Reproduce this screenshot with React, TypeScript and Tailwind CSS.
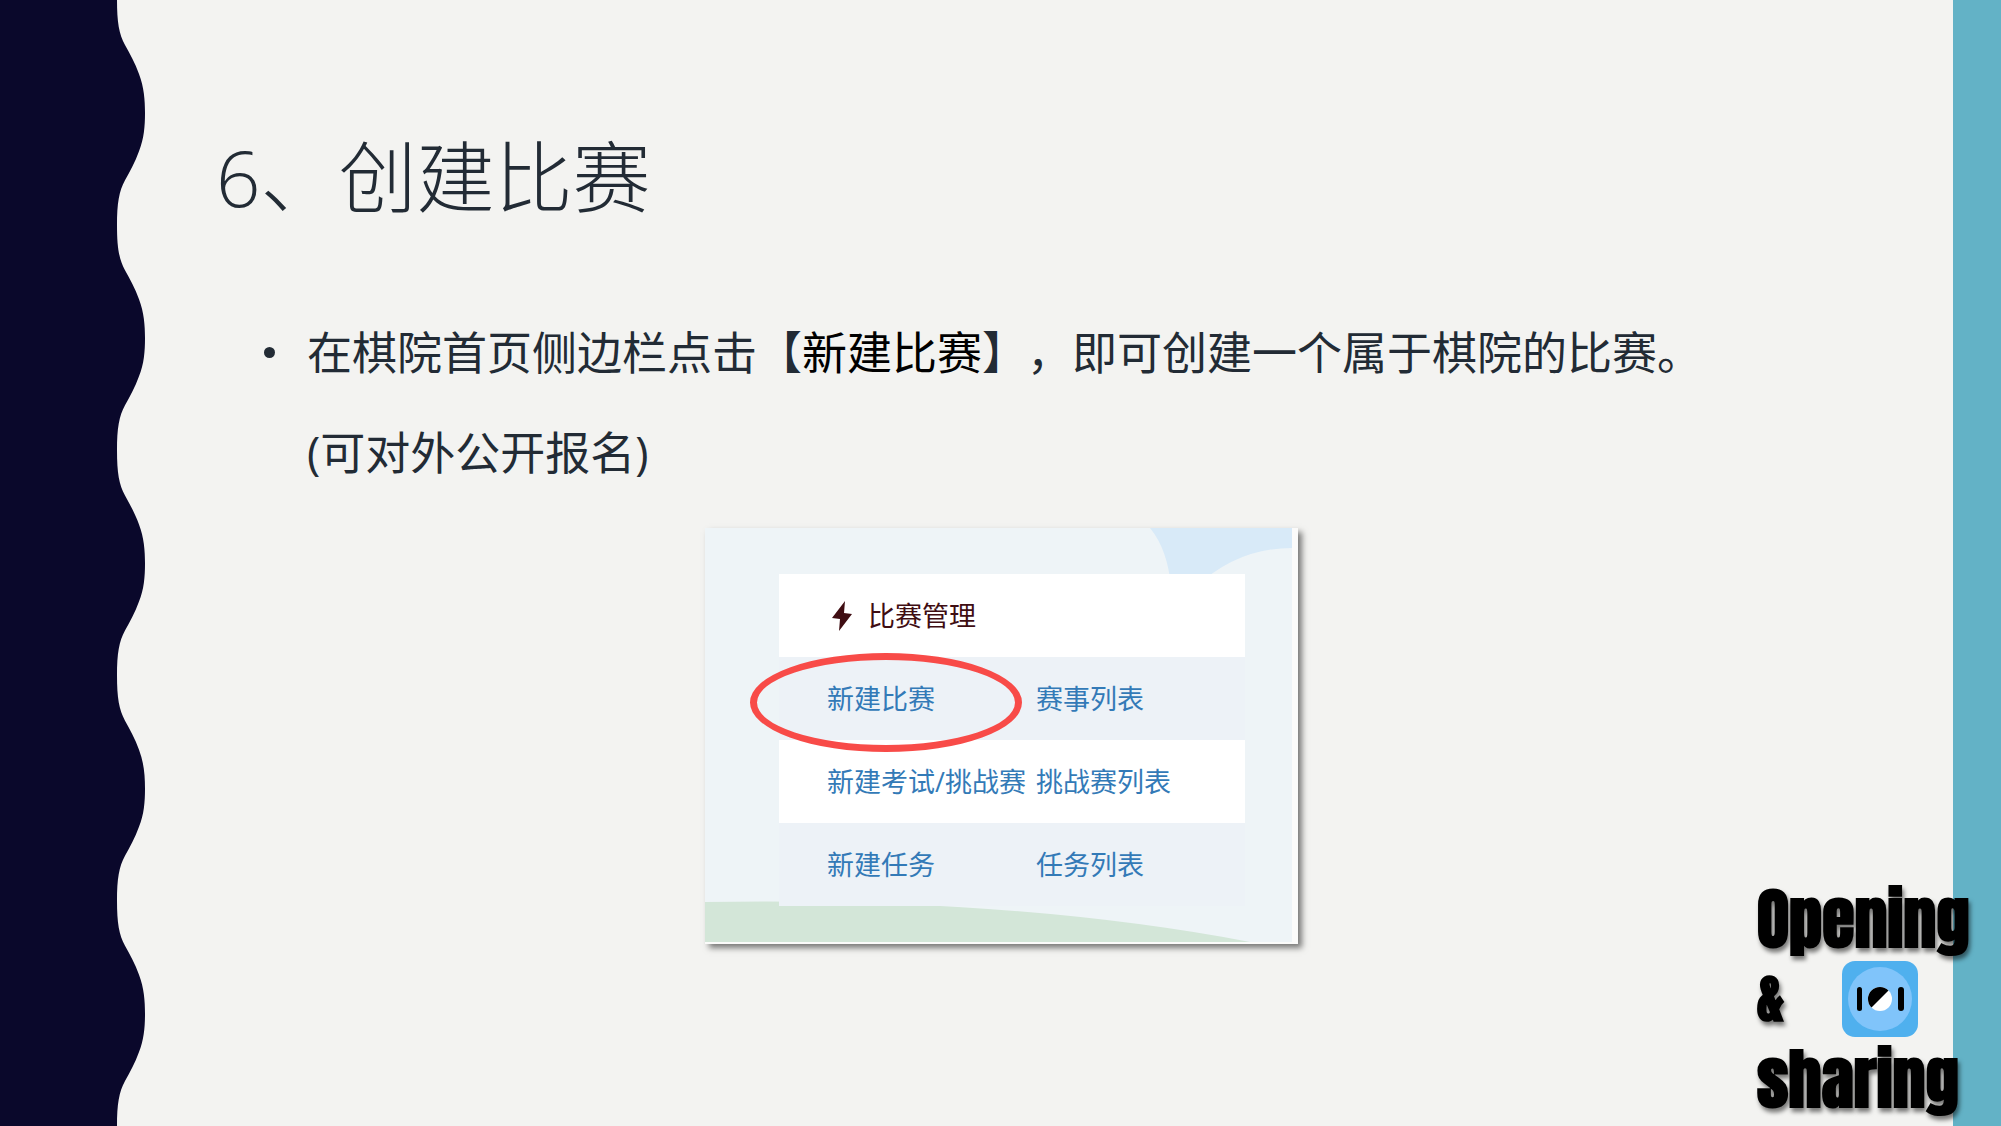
import React from "react";

const PERIODS = [0, 1, 2, 3, 4];

function WaveEdge() {
  const edge = PERIODS.map((i) => {
    const y = i * 225;
    return `C117 ${y + 22} 119 ${y + 34} 125 ${y + 45} C130 ${y + 54} 135 ${y + 63} 139 ${y + 74} C144 ${y + 87} 145 ${y + 100} 145 ${y + 113} C145 ${y + 126} 144 ${y + 139} 139 ${y + 151} C135 ${y + 162} 130 ${y + 171} 125 ${y + 180} C119 ${y + 191} 117 ${y + 203} 117 ${y + 225}`;
  }).join(" ");
  return (
    <svg
      className="h-full w-full"
      viewBox="0 0 146 1125"
      preserveAspectRatio="none"
      aria-hidden="true"
    >
      <path d={`M0 0 H117 ${edge} H0 Z`} fill="#0a082b" />
    </svg>
  );
}

const rows = [
  ["新建比赛", "赛事列表"],
  ["新建考试/挑战赛", "挑战赛列表"],
  ["新建任务", "任务列表"],
];

function MenuCard() {
  return (
    <figure className="relative w-[593px] border-r-[6px] border-b-2 border-[#fbfbfa] bg-[#eef4f7] pt-[46px] pb-[36px] pl-[74px] pr-[47px] shadow-[4px_4px_6px_rgba(0,0,0,0.5)]">
      <svg
        className="absolute inset-0 h-full w-full"
        viewBox="0 0 587 415"
        preserveAspectRatio="none"
        aria-hidden="true"
      >
        <path d="M445 0 Q463 22 466 60 H490 Q532 20 587 20 V0 Z" fill="#d8eaf8" />
        <path d="M0 375 Q310 370 545 415 H0 Z" fill="#d3e6d8" />
      </svg>
      <table className="relative w-full table-fixed border-collapse text-left text-[27px] leading-[35px] text-[#337ab7]">
        <colgroup>
          <col className="w-[257px]" />
          <col />
        </colgroup>
        <thead>
          <tr className="h-[83px] bg-white text-[#3f0d12]">
            <th colSpan={2} className="p-0 pl-[53px] font-normal">
              <span className="flex items-center gap-4">
                <svg className="h-[30px] w-5" viewBox="0 0 20 30" aria-hidden="true">
                  <path d="M13 0 L0 17 L8 18 L7 30 L20 13 L12 12 Z" fill="currentColor" />
                </svg>
                比赛管理
              </span>
            </th>
          </tr>
        </thead>
        <tbody>
          {rows.map(([create, list]) => (
            <tr key={create} className="h-[83px] odd:bg-[#edf2f7] even:bg-white">
              <td className="p-0 pl-12 whitespace-nowrap">
                <a href="#create">{create}</a>
              </td>
              <td className="p-0 whitespace-nowrap">
                <a href="#list">{list}</a>
              </td>
            </tr>
          ))}
        </tbody>
      </table>
      <div className="pointer-events-none absolute top-[125px] left-[45px] h-[99px] w-[272px] rounded-[50%] border-[7px] border-[#f84b48]" />
    </figure>
  );
}

function Badge() {
  return (
    <svg className="size-[76px]" viewBox="0 0 76 76" role="img" aria-label="101">
      <rect width="76" height="76" rx="13" fill="#4fb0ee" />
      <circle cx="38" cy="38" r="32" fill="#80c4fa" />
      <rect x="15" y="26" width="5" height="24" rx="2.5" fill="#000" />
      <rect x="56" y="26" width="6" height="24" rx="3" fill="#000" />
      <circle cx="38" cy="38" r="12" fill="#fff" />
      <path d="M29.5 46.5 A12 12 0 0 1 46.5 29.5 Z" fill="#000" />
    </svg>
  );
}

export default function App() {
  return (
    <div className="relative flex min-h-screen overflow-hidden bg-[#f3f3f1] font-['Open_Sans','Noto_Sans_CJK_SC',sans-serif] text-[#222b35]">
      <div className="relative w-[146px] shrink-0">
        <div className="absolute inset-0">
          <WaveEdge />
        </div>
      </div>
      <main className="flex flex-1 flex-col pt-[127px] pr-[166px] pl-[70px]">
        <h1 className="text-[78px] leading-[100px] font-light">6、创建比赛</h1>
        <ul className="mt-[76px] text-[45px] leading-[100px] [text-spacing-trim:space-all]">
          <li className="flex pl-12">
            <span className="mt-11 mr-8 size-[11px] shrink-0 rounded-full bg-[#222b35]" />
            <p>
              在棋院首页侧边栏点击【<span className="text-black">新建比赛</span>】，即可创建一个属于棋院的比赛。
              <br />
              (可对外公开报名)
            </p>
          </li>
        </ul>
        <div className="mt-[25px] flex justify-center">
          <MenuCard />
        </div>
      </main>
      <div className="w-12 shrink-0 bg-[#63b2c6]" />
      <div className="absolute right-5 bottom-[7px] w-[224px] font-['Impact','Anton','Roboto_Condensed','Open_Sans_Condensed',sans-serif] text-[66px] leading-[80px] font-black text-black [text-shadow:2px_4px_4px_rgba(0,0,0,0.5)]">
        <p>Opening</p>
        <p className="flex items-center justify-between pr-[63px]">
          <span className="text-[52px]">&amp;</span>
          <Badge />
        </p>
        <p>sharing</p>
      </div>
    </div>
  );
}
